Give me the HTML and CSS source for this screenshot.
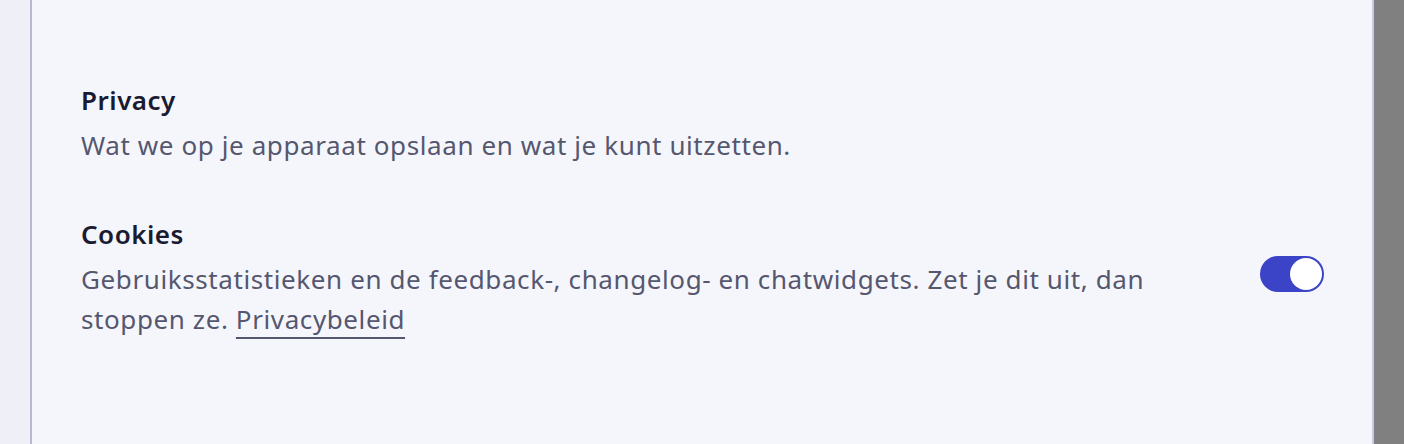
FILE: index.html
```html
<!DOCTYPE html>
<html lang="nl">
<head>
<meta charset="utf-8">
<title>Privacy</title>
<link rel="stylesheet" href="styles.css">
</head>
<body>
<div class="screen">
  <div class="gutter"></div>
  <main class="panel">
    <section class="section">
      <h2 class="title">Privacy</h2>
      <p class="desc">Wat we op je apparaat opslaan en wat je kunt uitzetten.</p>
    </section>
    <section class="row">
      <div class="row-text">
        <h3 class="title">Cookies</h3>
        <p class="desc">Gebruiksstatistieken en de feedback-, changelog- en chatwidgets. Zet je dit uit, dan stoppen ze. <a class="link" href="#">Privacybeleid</a></p>
      </div>
      <button class="toggle" type="button" aria-pressed="true" aria-label="Cookies"><span class="knob"></span></button>
    </section>
  </main>
  <div class="backdrop"></div>
</div>
</body>
</html>
```
FILE: styles.css
```css
html, body {
  margin: 0;
  padding: 0;
  height: 100%;
}
body {
  font-family: "Noto Sans", "Open Sans", sans-serif;
  background: #eff0f7;
}
.screen {
  display: flex;
  height: 444px;
  overflow: hidden;
}
.gutter {
  width: 30px;
  flex: none;
  background: #eff0f7;
}
.panel {
  flex: 1;
  background: #f5f6fb;
  border-left: 2px solid #b7b8d1;
  border-right: 2px solid #c9cbe2;
  padding: 83px 48px 0 49px;
  display: flex;
  flex-direction: column;
  gap: 52px;
}
.backdrop {
  width: 30px;
  flex: none;
  background: #808080;
}
.title {
  margin: 0;
  font-size: 26px;
  line-height: 34px;
  font-weight: 600;
  letter-spacing: 0.5px;
  color: #1a1b31;
}
.desc {
  margin: 8px 0 0;
  font-size: 26px;
  line-height: 40px;
  font-weight: 400;
  letter-spacing: 0.6px;
  color: #55576f;
}
.row {
  display: flex;
  align-items: center;
  gap: 40px;
}
.row-text {
  flex: 1;
  max-width: 1100px;
}
.link {
  color: #55576f;
  text-decoration: underline;
  text-decoration-thickness: 2px;
  text-underline-offset: 8px;
}
.toggle {
  flex: none;
  width: 64px;
  height: 36px;
  border: none;
  border-radius: 18px;
  background: #3b43c6;
  padding: 2px;
  display: flex;
  justify-content: flex-end;
  margin-left: auto;
  margin-top: -8px;
  cursor: pointer;
}
.knob {
  width: 32px;
  height: 32px;
  border-radius: 50%;
  background: #ffffff;
}
```
